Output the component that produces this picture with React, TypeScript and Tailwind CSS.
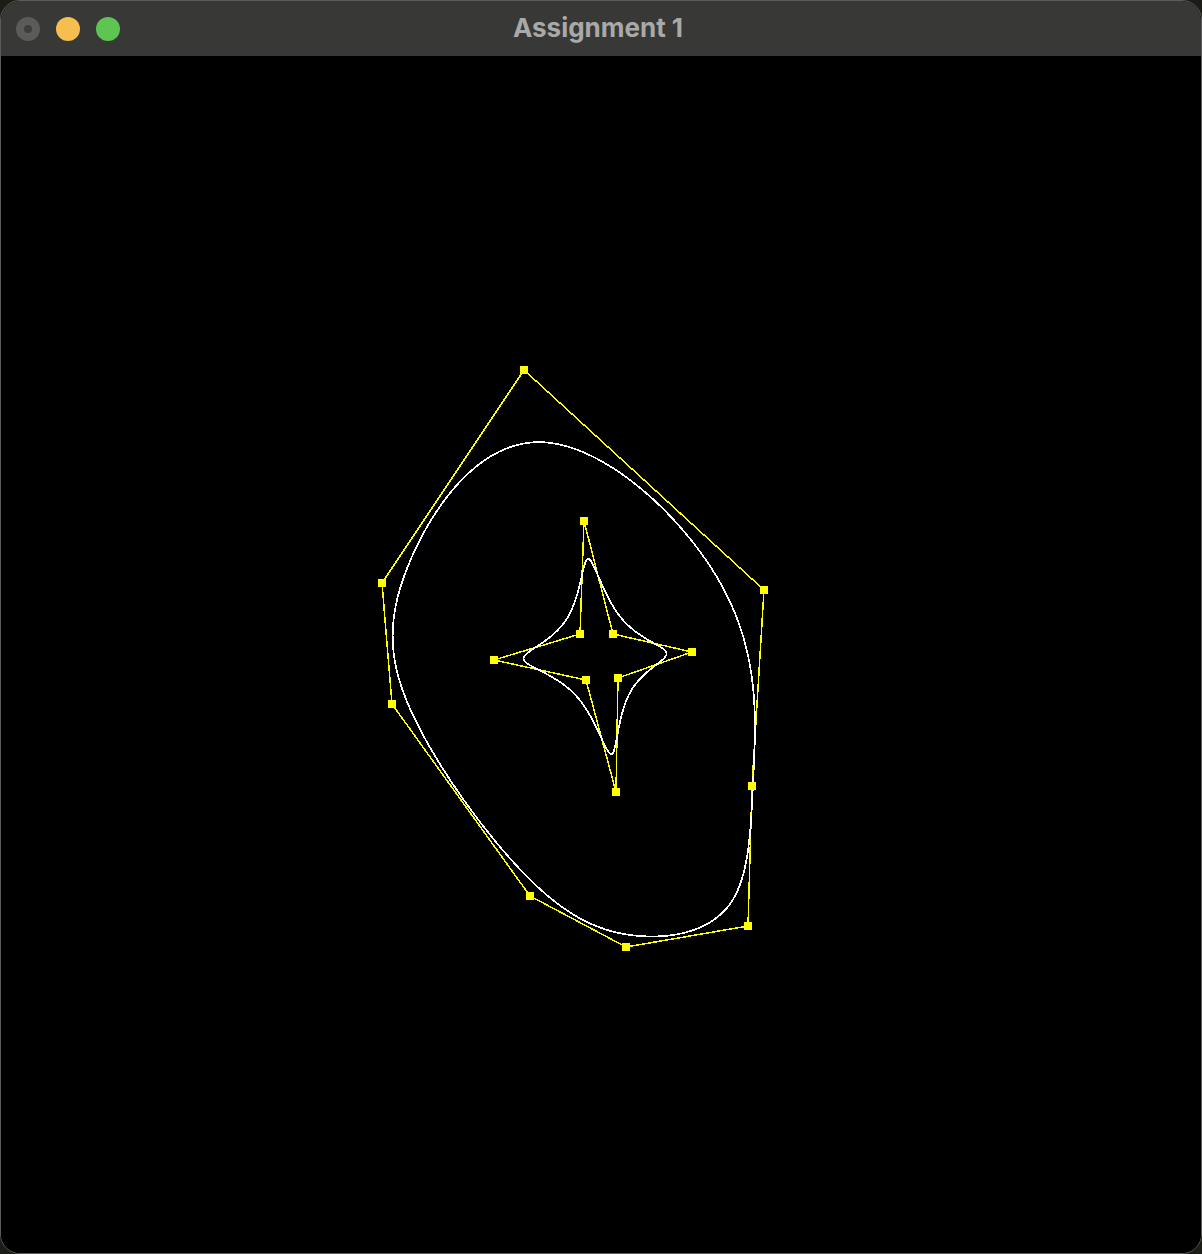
import React from "react";

type P = [number, number];

const outer: P[] = [
  [524, 370],
  [764, 590],
  [752, 786],
  [748, 926],
  [626, 947],
  [530, 896],
  [392, 704],
  [382, 583],
];

const star: P[] = [
  [584, 521],
  [613, 634],
  [692, 652],
  [618, 678],
  [616, 792],
  [586, 680],
  [494, 660],
  [580, 634],
];

function bspline(pts: P[], steps = 60): string {
  const n = pts.length;
  const out: string[] = [];
  for (let i = 0; i < n; i++) {
    const p0 = pts[(i - 1 + n) % n];
    const p1 = pts[i];
    const p2 = pts[(i + 1) % n];
    const p3 = pts[(i + 2) % n];
    for (let s = 0; s < steps; s++) {
      const t = s / steps;
      const t2 = t * t;
      const t3 = t2 * t;
      const b0 = (1 - t) ** 3 / 6;
      const b1 = (3 * t3 - 6 * t2 + 4) / 6;
      const b2 = (-3 * t3 + 3 * t2 + 3 * t + 1) / 6;
      const b3 = t3 / 6;
      const x = b0 * p0[0] + b1 * p1[0] + b2 * p2[0] + b3 * p3[0];
      const y = b0 * p0[1] + b1 * p1[1] + b2 * p2[1] + b3 * p3[1];
      out.push(`${x.toFixed(2)},${y.toFixed(2)}`);
    }
  }
  return out.join(" ");
}

function Shape({ pts }: { pts: P[] }) {
  return (
    <g>
      <polygon
        points={pts.map((p) => `${p[0]},${p[1]}`).join(" ")}
        fill="none"
        stroke="#ffff00"
        strokeWidth={1.5}
      />
      <polygon points={bspline(pts)} fill="none" stroke="#ffffff" strokeWidth={1.7} />
      {pts.map((p, i) => (
        <rect key={i} x={p[0] - 4} y={p[1] - 4} width={8} height={8} fill="#ffff00" />
      ))}
    </g>
  );
}

export default function App() {
  return (
    <div className="w-[1202px] h-[1254px] bg-[#1d1d17]">
      <div className="w-[1202px] h-[1254px] rounded-[20px] border border-[#5c5c5c] overflow-hidden flex flex-col bg-black">
        <div className="h-[55px] shrink-0 bg-[#383836] relative flex items-center">
          <div className="flex items-center gap-[16px] pl-[15px]">
            <div className="w-[24px] h-[24px] rounded-full bg-[#5b5b5a] flex items-center justify-center">
              <div className="w-[8px] h-[8px] rounded-full bg-[#3e3e3d]" />
            </div>
            <div className="w-[24px] h-[24px] rounded-full bg-[#f5be4f]" />
            <div className="w-[24px] h-[24px] rounded-full bg-[#5ec553]" />
          </div>
          <div
            className="absolute left-0 right-0 top-0 h-[52px] flex items-center justify-center text-[26px] font-bold text-[#a9a9a8]"
            style={{ fontFamily: "Inter, 'Liberation Sans', sans-serif" }}
          >
            <span className="mr-[6px]">Assignment 1</span>
          </div>
        </div>
        <div className="flex-1 bg-black">
          <svg width={1200} height={1197} viewBox="1 56 1200 1197" className="block" shapeRendering="crispEdges">
            <Shape pts={outer} />
            <Shape pts={star} />
          </svg>
        </div>
      </div>
    </div>
  );
}
